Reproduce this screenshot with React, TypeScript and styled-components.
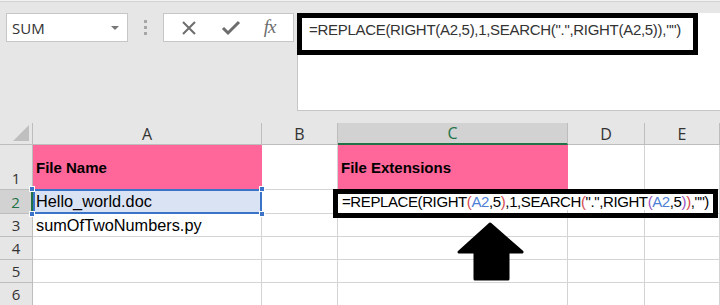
import React from "react";
import styled, { createGlobalStyle } from "styled-components";

const GlobalStyle = createGlobalStyle`
  html, body {
    margin: 0;
    padding: 0;
    background: #e6e6e6;
    overflow: hidden;
  }
  * {
    box-sizing: border-box;
  }
`;

const UI_FONT = `"Open Sans", "Noto Sans", sans-serif`;
const CELL_FONT = `"Liberation Sans", Arial, sans-serif`;
const GRID = "#d4d4d4";
const HEAD_LINE = "#bdbdbd";
const EXCEL_GREEN = "#217346";
const SEL_BLUE = "#3b73c8";

type Token = [string, string?];

const formula: Token[] = [
  ["=REPLACE(RIGHT"],
  ["(", "#d6494e"],
  ["A2", "#4f7fd6"],
  [",5"],
  [")", "#d6494e"],
  [",1,SEARCH"],
  ["(", "#d6494e"],
  ['".",RIGHT'],
  ["(", "#9a55c4"],
  ["A2", "#4f7fd6"],
  [",5"],
  [")", "#9a55c4"],
  [")", "#d6494e"],
  [',"")'],
];

const Page = styled.div`
  width: 720px;
  height: 305px;
  border-top: 1px solid #f2f2f2;
`;

const Toolbar = styled.div`
  border-top: 1px solid #d2d2d2;
  padding-top: 11px;
  height: 122px;
  display: flex;
  align-items: flex-start;
`;

const NameBox = styled.div`
  margin-left: 6px;
  width: 122px;
  height: 29px;
  background: #fff;
  border: 1px solid #c6c6c6;
  display: flex;
  align-items: center;
  justify-content: space-between;
  padding: 0 8px 0 5px;
  font-family: ${UI_FONT};
  font-size: 15px;
  color: #333;
`;

const DropArrow = styled.span`
  width: 0;
  height: 0;
  border-left: 4px solid transparent;
  border-right: 4px solid transparent;
  border-top: 4px solid #777;
  margin-top: 1px;
`;

const Grip = styled.div`
  width: 35px;
  height: 29px;
  display: flex;
  flex-direction: column;
  align-items: center;
  justify-content: center;
  gap: 3px;
`;

const GripDot = styled.span`
  width: 3px;
  height: 3px;
  background: #a6a6a6;
`;

const FxButtons = styled.div`
  width: 131px;
  height: 29px;
  background: #fff;
  border: 1px solid #c6c6c6;
  display: flex;
  align-items: center;
  justify-content: space-around;
  padding: 0 6px 0 4px;
`;

const FxLabel = styled.span`
  font-family: "Liberation Serif", "DejaVu Serif", serif;
  font-style: italic;
  font-size: 19px;
  color: #6d6d6d;
  letter-spacing: -1px;
  margin-top: -2px;
`;

const FormulaBar = styled.div`
  flex: 1;
  margin-left: 3px;
  height: 98px;
  background: #fff;
  border-left: 1px solid #c6c6c6;
  border-bottom: 1px solid #c6c6c6;
`;

const FormulaHighlight = styled.div`
  width: 401px;
  height: 42px;
  margin-left: -1px;
  border: 5px solid #000;
  padding: 1px 0 0 7px;
  font-family: ${CELL_FONT};
  font-size: 15px;
  letter-spacing: -0.3px;
  line-height: 22px;
  color: #333;
  white-space: nowrap;
`;

const Sheet = styled.div`
  position: relative;
  display: grid;
  grid-template-columns: 33px 229px 76px 230px 77px 1fr;
  grid-template-rows: 22px 45px 24px 23px 23px 23px 23px;
`;

const Corner = styled.div`
  position: relative;
  border-right: 1px solid ${HEAD_LINE};
  border-bottom: 1px solid ${HEAD_LINE};

  &::after {
    content: "";
    position: absolute;
    right: 3px;
    bottom: 3px;
    width: 0;
    height: 0;
    border-left: 16px solid transparent;
    border-bottom: 16px solid #bfbfbf;
  }
`;

const ColHeader = styled.div<{ $active?: boolean }>`
  display: flex;
  align-items: center;
  justify-content: center;
  background: ${({ $active }) => ($active ? "#d2d2d2" : "#e6e6e6")};
  border-right: 1px solid ${HEAD_LINE};
  border-bottom: ${({ $active }) =>
    $active ? `2px solid ${EXCEL_GREEN}` : `1px solid ${HEAD_LINE}`};
  font-family: ${UI_FONT};
  font-size: 16px;
  color: ${({ $active }) => ($active ? EXCEL_GREEN : "#333")};
`;

const RowHeader = styled.div<{ $active?: boolean; $bottom?: boolean }>`
  display: flex;
  justify-content: center;
  align-items: ${({ $bottom }) => ($bottom ? "flex-end" : "center")};
  padding-bottom: ${({ $bottom }) => ($bottom ? "1px" : "0")};
  background: ${({ $active }) => ($active ? "#d2d2d2" : "#e6e6e6")};
  border-right: ${({ $active }) =>
    $active ? `2px solid ${EXCEL_GREEN}` : `1px solid ${HEAD_LINE}`};
  border-bottom: 1px solid ${HEAD_LINE};
  font-family: ${UI_FONT};
  font-size: 15px;
  line-height: 20px;
  color: ${({ $active }) => ($active ? EXCEL_GREEN : "#333")};
`;

const Cell = styled.div<{ $fill?: "pink" | "sel"; $bold?: boolean; $spill?: boolean }>`
  position: relative;
  display: flex;
  align-items: center;
  padding-left: 3px;
  background: ${({ $fill }) =>
    $fill === "pink" ? "#ff6699" : $fill === "sel" ? "#dae3f3" : "#fff"};
  border-right: 1px solid ${({ $fill }) => ($fill === "pink" ? "#ff6699" : GRID)};
  border-bottom: 1px solid ${({ $fill }) => ($fill === "pink" ? "#ff6699" : GRID)};
  font-family: ${CELL_FONT};
  font-size: ${({ $bold }) => ($bold ? "15px" : "16.3px")};
  font-weight: ${({ $bold }) => ($bold ? 700 : 400)};
  color: #000;
  white-space: nowrap;
  overflow: visible;
  z-index: ${({ $fill, $spill }) => ($spill ? 4 : $fill === "sel" ? 2 : 1)};
`;

const Selection = styled.span`
  position: absolute;
  left: 0;
  top: -1px;
  right: -1px;
  bottom: -1px;
  border: 2px solid ${SEL_BLUE};
  pointer-events: none;
`;

const Handle = styled.span<{ $x: "l" | "r"; $y: "t" | "b" }>`
  position: absolute;
  width: 6px;
  height: 6px;
  background: ${SEL_BLUE};
  border: 1px solid #fff;
  ${({ $x }) => ($x === "l" ? "left: -4px;" : "right: -4px;")}
  ${({ $y }) => ($y === "t" ? "top: -4px;" : "bottom: -4px;")}
`;

const CellFormula = styled.span`
  font-size: 15px;
  letter-spacing: -0.4px;
  padding-left: 1px;
  padding-right: 10px;
  background: #fff;
`;

const CellCallout = styled.span`
  position: absolute;
  left: -5px;
  top: -1px;
  width: 385px;
  height: 29px;
  border: 5px solid #000;
  pointer-events: none;
`;

const Arrow = styled.svg`
  position: absolute;
  left: 456px;
  top: 98px;
  z-index: 5;
`;

const FormulaText = ({ colored }: { colored?: boolean }) => (
  <>
    {formula.map(([text, color], i) => (
      <span key={i} style={colored && color ? { color } : undefined}>
        {text}
      </span>
    ))}
  </>
);

const CancelIcon = () => (
  <svg width="18" height="18" viewBox="0 0 18 18">
    <path d="M3 3 L15 15 M15 3 L3 15" stroke="#6d6d6d" strokeWidth="2" fill="none" />
  </svg>
);

const EnterIcon = () => (
  <svg width="20" height="18" viewBox="0 0 20 18">
    <path
      d="M2 9 L7 14 L18 3"
      stroke="#6d6d6d"
      strokeWidth="3"
      fill="none"
      strokeLinejoin="miter"
    />
  </svg>
);

const rows = [3, 4, 5, 6];

export default function App() {
  return (
    <Page>
      <GlobalStyle />
      <Toolbar>
        <NameBox>
          SUM
          <DropArrow />
        </NameBox>
        <Grip>
          <GripDot />
          <GripDot />
          <GripDot />
        </Grip>
        <FxButtons>
          <CancelIcon />
          <EnterIcon />
          <FxLabel>fx</FxLabel>
        </FxButtons>
        <FormulaBar>
          <FormulaHighlight>
            <FormulaText />
          </FormulaHighlight>
        </FormulaBar>
      </Toolbar>

      <Sheet>
        <Corner />
        <ColHeader>A</ColHeader>
        <ColHeader>B</ColHeader>
        <ColHeader $active>C</ColHeader>
        <ColHeader>D</ColHeader>
        <ColHeader>E</ColHeader>

        <RowHeader $bottom>1</RowHeader>
        <Cell $fill="pink" $bold>
          File Name
        </Cell>
        <Cell />
        <Cell $fill="pink" $bold>
          File Extensions
        </Cell>
        <Cell />
        <Cell />

        <RowHeader $active>2</RowHeader>
        <Cell $fill="sel">
          Hello_world.doc
          <Selection />
          <Handle $x="l" $y="t" />
          <Handle $x="r" $y="t" />
          <Handle $x="l" $y="b" />
          <Handle $x="r" $y="b" />
        </Cell>
        <Cell />
        <Cell $spill>
          <CellFormula>
            <FormulaText colored />
          </CellFormula>
          <CellCallout />
        </Cell>
        <Cell />
        <Cell />

        {rows.map((r) => (
          <React.Fragment key={r}>
            <RowHeader>{r}</RowHeader>
            <Cell>{r === 3 ? "sumOfTwoNumbers.py" : ""}</Cell>
            <Cell />
            <Cell />
            <Cell />
            <Cell />
          </React.Fragment>
        ))}

        <Arrow width="70" height="62" viewBox="0 0 70 62">
          <polygon
            points="34,3 66,31 52,31 52,58 19,58 19,31 3,31"
            fill="#000"
            stroke="#000"
            strokeWidth="3"
            strokeLinejoin="round"
          />
        </Arrow>
      </Sheet>
    </Page>
  );
}
